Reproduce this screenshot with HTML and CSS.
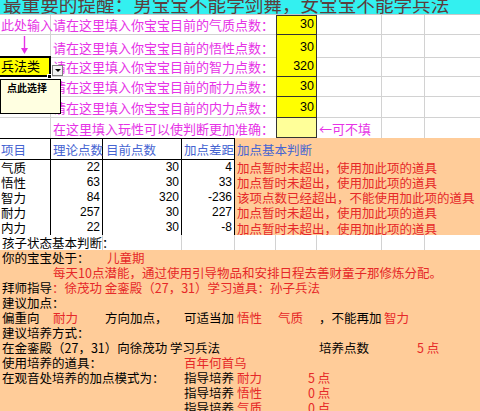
FILE: index.html
```html
<!DOCTYPE html>
<html lang="zh-CN">
<head>
<meta charset="utf-8">
<title>宝宝培养</title>
<link rel="stylesheet" href="styles.css">
</head>
<body>
<div class="sheet">
  <div class="row r-title"><div class="c s-all title">最重要的提醒：男宝宝不能学剑舞，女宝宝不能学兵法</div></div>

  <div class="row r-in h20">
    <div class="c ca gr gb mag pa">此处输入</div>
    <div class="c s-be gb mag">请在这里填入你宝宝目前的气质点数：</div>
    <div class="c cf yel top num">30</div>
    <div class="c cg gr gb"></div>
    <div class="c ch gr gb"></div>
    <div class="c ci gb"></div>
  </div>
  <div class="row r-in h21">
    <div class="c ca gr gb arrow-cell">
      <svg class="arrow" width="50" height="20" viewBox="0 0 50 20"><line x1="24.5" y1="1" x2="24.5" y2="15" stroke="#e633e6" stroke-width="1.4"/><polygon points="21,13 28,13 24.5,19" fill="#e633e6"/></svg>
    </div>
    <div class="c s-be gb mag">请在这里填入你宝宝目前的悟性点数：</div>
    <div class="c cf yel num">30</div>
    <div class="c cg gr gb"></div>
    <div class="c ch gr gb"></div>
    <div class="c ci gb"></div>
  </div>
  <div class="row r-in h21">
    <div class="c ca sel">兵法类
      <span class="handle"></span>
      <span class="dd"><span class="tri"></span></span>
      <div class="note">点此选择</div>
    </div>
    <div class="c s-be gb mag">请在这里填入你宝宝目前的智力点数：</div>
    <div class="c cf yel num">320</div>
    <div class="c cg gr gb"></div>
    <div class="c ch gr gb"></div>
    <div class="c ci gb"></div>
  </div>
  <div class="row r-in h20">
    <div class="c ca gr gb"></div>
    <div class="c s-be gb mag">请在这里填入你宝宝目前的耐力点数：</div>
    <div class="c cf yel num">30</div>
    <div class="c cg gr gb"></div>
    <div class="c ch gr gb"></div>
    <div class="c ci gb"></div>
  </div>
  <div class="row r-in h21">
    <div class="c ca gr gb"></div>
    <div class="c s-be gb mag">请在这里填入你宝宝目前的内力点数：</div>
    <div class="c cf yel num">30</div>
    <div class="c cg gr gb"></div>
    <div class="c ch gr gb"></div>
    <div class="c ci gb"></div>
  </div>
  <div class="row r-in h20">
    <div class="c ca gr"></div>
    <div class="c s-be mag">在这里填入玩性可以使判断更加准确：</div>
    <div class="c cf yel light"></div>
    <div class="c cg gr mag">←可不填</div>
    <div class="c ch gr"></div>
    <div class="c ci"></div>
  </div>

  <div class="row r-head">
    <div class="c ca th pa">项目</div>
    <div class="c cb th">理论点数</div>
    <div class="c cc th p3">目前点数</div>
    <div class="c cd th">加点差距</div>
    <div class="c s-ei judge hd">加点基本判断</div>
  </div>
  <div class="row r-data">
    <div class="c ca td pa">气质</div>
    <div class="c cb td num">22</div>
    <div class="c cc td num">30</div>
    <div class="c cd td num">4</div>
    <div class="c s-ei judge">加点暂时未超出，使用加此项的道具</div>
  </div>
  <div class="row r-data">
    <div class="c ca td pa">悟性</div>
    <div class="c cb td num">63</div>
    <div class="c cc td num">30</div>
    <div class="c cd td num">33</div>
    <div class="c s-ei judge">加点暂时未超出，使用加此项的道具</div>
  </div>
  <div class="row r-data">
    <div class="c ca td pa">智力</div>
    <div class="c cb td num">84</div>
    <div class="c cc td num">320</div>
    <div class="c cd td num">-236</div>
    <div class="c s-ei judge">该项点数已经超出，不能使用加此项的道具</div>
  </div>
  <div class="row r-data">
    <div class="c ca td pa">耐力</div>
    <div class="c cb td num">257</div>
    <div class="c cc td num">30</div>
    <div class="c cd td num">227</div>
    <div class="c s-ei judge">加点暂时未超出，使用加此项的道具</div>
  </div>
  <div class="row r-data last">
    <div class="c ca td pa">内力</div>
    <div class="c cb td num">22</div>
    <div class="c cc td num">30</div>
    <div class="c cd td num">-8</div>
    <div class="c s-ei judge">加点暂时未超出，使用加此项的道具</div>
  </div>

  <div class="row r-plain">
    <div class="c s-ab gr">孩子状态基本判断：</div>
    <div class="c cc gr"></div>
    <div class="c cd gr"></div>
    <div class="c ce gr"></div>
    <div class="c cf gr"></div>
    <div class="c cg gr"></div>
    <div class="c ch gr"></div>
    <div class="c ci"></div>
  </div>

  <div class="row r-or">
    <div class="c ca">你的宝宝处于：</div>
    <div class="c cc red p4">儿童期</div>
  </div>
  <div class="row r-or">
    <div class="c cb red">每天10点潜能，通过使用引导物品和安排日程去善财童子那修炼分配。</div>
  </div>
  <div class="row r-or">
    <div class="c ca">拜师指导</div>
    <div class="c cb red p1">：徐茂功 金銮殿（27，31）学习道具：孙子兵法</div>
  </div>
  <div class="row r-or">
    <div class="c ca">建议加点：</div>
  </div>
  <div class="row r-or">
    <div class="c ca">偏重向</div>
    <div class="c cb red">耐力</div>
    <div class="c cc">方向加点，</div>
    <div class="c cd">可适当加</div>
    <div class="c ce red">悟性</div>
    <div class="c cf red">气质</div>
    <div class="c cg">，不能再加</div>
    <div class="c ch red">智力</div>
  </div>
  <div class="row r-or">
    <div class="c ca">建议培养方式：</div>
  </div>
  <div class="row r-or">
    <div class="c ca">在金銮殿（27，31）向徐茂功 学习兵法</div>
    <div class="c cg">培养点数</div>
    <div class="c ch red p35">5 点</div>
  </div>
  <div class="row r-or">
    <div class="c ca">使用培养的道具：</div>
    <div class="c cd red">百年何首乌</div>
  </div>
  <div class="row r-or">
    <div class="c ca">在观音处培养的加点模式为：</div>
    <div class="c cd">指导培养</div>
    <div class="c ce red">耐力</div>
    <div class="c cf red p32">5 点</div>
  </div>
  <div class="row r-or">
    <div class="c cd">指导培养</div>
    <div class="c ce red">悟性</div>
    <div class="c cf red p32">0 点</div>
  </div>
  <div class="row r-or">
    <div class="c cd">指导培养</div>
    <div class="c ce red">气质</div>
    <div class="c cf red p32">0 点</div>
  </div>
</div>
</body>
</html>
```

FILE: styles.css
```css
* { box-sizing: border-box; }
html, body { margin: 0; padding: 0; background: #fff; }
body {
  width: 480px;
  height: 411px;
  overflow: hidden;
  font-family: "Noto Sans CJK SC", "Liberation Sans", sans-serif;
  color: #000;
}
.sheet {
  display: flex;
  flex-direction: column;
  width: 480px;
  height: 411px;
  overflow: hidden;
}
.row {
  display: grid;
  grid-template-columns: 51px 52px 79px 53px 41px 41px 65px 43px 55px;
  flex: none;
}
.c {
  display: flex;
  white-space: nowrap;
  min-width: 0;
  padding-left: 2px;
}

/* column placement */
.ca { grid-column: 1; }
.cb { grid-column: 2; }
.cc { grid-column: 3; }
.cd { grid-column: 4; }
.ce { grid-column: 5; }
.cf { grid-column: 6; }
.cg { grid-column: 7; }
.ch { grid-column: 8; }
.ci { grid-column: 9; }
.s-all { grid-column: 1 / -1; }
.s-be { grid-column: 2 / 6; }
.s-ab { grid-column: 1 / 3; }
.s-ei { grid-column: 5 / 10; }

.pa { padding-left: 1px; }
.p1 { padding-left: 1px; }
.p3 { padding-left: 3px; }
.p4 { padding-left: 4px; }
.p32 { padding-left: 32px; }
.p35 { padding-left: 35px; }

/* gridlines */
.gr { border-right: 1px solid #d2d2d2; }
.gb { border-bottom: 1px solid #d2d2d2; }

/* title */
.r-title {
  height: 15px;
  background: #33f0f0;
  border-bottom: 1px solid #c8c8c8;
}
.title {
  font-size: 18.6px;
  line-height: 8px;
  color: #5c3d3d;
  padding-left: 3px;
  overflow: hidden;
  align-items: flex-start;
}

/* input rows */
.r-in.h20 { height: 20px; }
.r-in.h21 { height: 21px; }
.r-in .c {
  font-size: 13px;
  line-height: 15px;
  align-items: flex-end;
  padding-bottom: 2px;
}
.mag { color: #e633e6; }
.yel {
  background: #ffff00;
  border: 1px solid #333;
  border-top: none;
}
.yel.top { border-top: 1px solid #333; }
.yel.light { background: #ffff99; }
.num {
  justify-content: flex-end;
  padding-right: 2px;
  font-family: "Liberation Sans", "Noto Sans CJK SC", sans-serif;
}
.r-in .num { font-size: 12.5px; }

.arrow-cell { padding: 0; align-items: flex-start; }
.arrow { display: block; }

/* selected dropdown cell */
.sel {
  position: relative;
  z-index: 5;
  background: #ffff00;
  border-top: 2px solid #000;
  border-right: 2px solid #000;
  border-bottom: 2px solid #000;
  padding-left: 1px;
}
.r-in .sel { padding-bottom: 2px; }
.handle {
  position: absolute;
  right: -3px;
  bottom: -4px;
  width: 5px;
  height: 5px;
  background: #000;
  border: 1px solid #fff;
}
.dd {
  position: absolute;
  left: 52px;
  top: 7px;
  width: 11px;
  height: 11px;
  background: #f4f4f4;
  border: 1px solid #808080;
  display: flex;
  align-items: center;
  justify-content: center;
}
.tri {
  width: 0;
  height: 0;
  border-left: 3px solid transparent;
  border-right: 3px solid transparent;
  border-top: 3px solid #000;
}
.note {
  position: absolute;
  left: 0;
  top: 21px;
  width: 61px;
  height: 35px;
  background: #ffffe1;
  border: 1px solid #000;
  font-size: 10px;
  line-height: 12px;
  font-weight: bold;
  padding: 2px 0 0 6px;
  white-space: nowrap;
}

/* table */
.r-head { height: 22px; }
.th {
  font-size: 12.5px;
  color: #4664d2;
  align-items: center;
  background: #fff;
  border-top: 1px solid #000;
  border-bottom: 1px solid #000;
  border-right: 1px solid #000;
}
.r-data { height: 15px; }
.r-data .c, .r-plain .c, .r-or .c {
  font-size: 12.5px;
  line-height: 15px;
  align-items: center;
}
.td { border-right: 1px solid #000; background: #fff; }
.r-data .num { font-size: 12px; }
.last .td { border-bottom: 1px solid #000; }
.judge {
  background: #ffcc99;
  color: #e62828;
  font-size: 12.5px;
  align-items: center;
}
.judge.hd { color: #4664d2; }

.r-plain { height: 15px; background: #fff; }
.r-or { height: 15px; background: #ffcc99; }
.red { color: #e62828; }
```
